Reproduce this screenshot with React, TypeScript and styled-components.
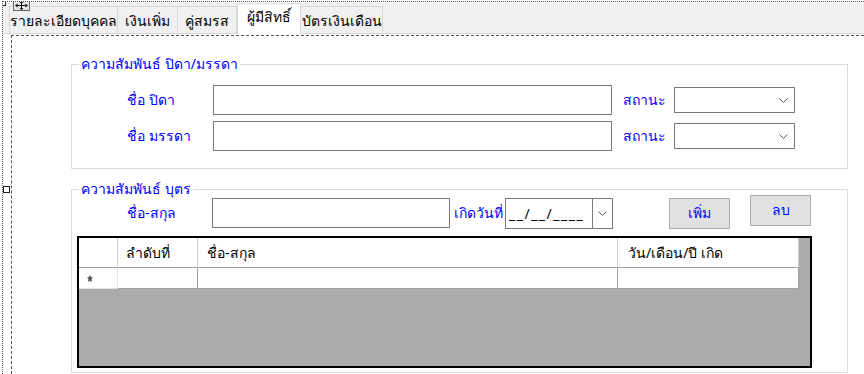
import React from 'react'
import styled, { createGlobalStyle } from 'styled-components'

const uiFont = `"Noto Sans", "DejaVu Sans", sans-serif`

const GlobalStyle = createGlobalStyle`
  html, body {
    margin: 0;
    padding: 0;
    background: #fff;
  }
  body {
    font-family: ${uiFont};
    font-size: 14px;
  }
  * {
    box-sizing: border-box;
  }
`

const Designer = styled.div`
  position: relative;
  width: 862px;
  height: 373px;
  margin: 1px 0 0 2px;
  padding-top: 1px;
  border-top: 1px dotted #555;
  border-left: 1px dotted #555;
  display: flex;
  flex-direction: column;
  overflow: hidden;
`

const Handle = styled.div<{ $top: number; $left: number }>`
  position: absolute;
  top: ${p => p.$top}px;
  left: ${p => p.$left}px;
  width: 7px;
  height: 7px;
  background: #fff;
  border: 1px solid #222;
  z-index: 5;
`

const MoveGlyph = styled.div`
  position: absolute;
  top: -2px;
  left: 10px;
  width: 17px;
  height: 11px;
  background: #e6e6e6;
  border: 1px solid #666;
  display: flex;
  align-items: center;
  justify-content: center;
  z-index: 5;
`

const TabStrip = styled.div`
  display: flex;
  align-items: flex-end;
  height: 31px;
  padding-left: 6px;
  background: #f0f0f0;
  border-bottom: 1px solid #d9d9d9;
`

const Tab = styled.div<{ $active?: boolean; $width: number }>`
  width: ${p => p.$width}px;
  height: ${p => (p.$active ? 31 : 27)}px;
  margin-bottom: ${p => (p.$active ? -1 : 0)}px;
  padding-bottom: ${p => (p.$active ? 4 : 0)}px;
  padding-top: ${p => (p.$active ? 0 : 1)}px;
  display: flex;
  align-items: center;
  justify-content: center;
  background: ${p => (p.$active ? '#fff' : '#f0f0f0')};
  border: 1px solid #d9d9d9;
  border-bottom: none;
  border-left-width: ${p => (p.$active ? 1 : 0)}px;
  color: #000;
  white-space: nowrap;
  position: relative;
  z-index: ${p => (p.$active ? 2 : 1)};
  &:first-child {
    border-left-width: 1px;
  }
`

const TabPage = styled.div`
  flex: 1;
  margin-left: 7px;
  padding: 1px 0 0 1px;
  background: #fff;
  display: flex;
`

const DesignSurface = styled.div`
  flex: 1;
  border-top: 1px dashed #555;
  border-left: 1px dashed #555;
  padding: 20px 0 0 59px;
  display: flex;
  flex-direction: column;
  gap: 12px;
`

const GroupBox = styled.fieldset`
  width: 777px;
  margin: 0;
  min-width: 0;
  padding: 0;
  border: 1px solid #dcdcdc;
`

const Legend = styled.legend`
  margin-left: 7px;
  padding: 0 2px;
  height: 16px;
  line-height: 16px;
  color: #0000ff;
`

const GroupBody = styled.div<{ $pad: string }>`
  padding: ${p => p.$pad};
`

const ParentGrid = styled.div`
  display: grid;
  grid-template-columns: 86px 399px 62px 121px;
  row-gap: 6px;
  align-items: center;
  & > :nth-child(4n + 3) {
    padding-left: 11px;
  }
`

const Label = styled.span<{ $width?: number; $indent?: number }>`
  width: ${p => (p.$width ? `${p.$width}px` : 'auto')};
  padding-left: ${p => p.$indent ?? 0}px;
  flex-shrink: 0;
  color: #0000ff;
  white-space: nowrap;
`

const TextBox = styled.div<{ $width?: number }>`
  width: ${p => (p.$width ? `${p.$width}px` : '100%')};
  height: 30px;
  border: 1px solid #7a7a7a;
  background: #fff;
`

const Combo = styled.div`
  height: 26px;
  border: 1px solid #7a7a7a;
  background: #fff;
  display: flex;
  justify-content: flex-end;
  align-items: center;
  padding-right: 6px;
`

const ChildRow = styled.div`
  display: flex;
  align-items: center;
  height: 32px;
  padding-left: 55px;
`

const DatePicker = styled.div`
  width: 108px;
  height: 31px;
  flex-shrink: 0;
  border: 1px solid #7a7a7a;
  display: flex;
  align-items: stretch;
`

const DateText = styled.div`
  flex: 1;
  padding-left: 3px;
  display: flex;
  align-items: center;
  color: #000;
  letter-spacing: 1.5px;
`

const DateButton = styled.div`
  width: 20px;
  border-left: 1px solid #7a7a7a;
  display: flex;
  align-items: center;
  justify-content: center;
`

const Button = styled.div<{ $lift?: number; $gap: number }>`
  width: 61px;
  height: 31px;
  flex-shrink: 0;
  margin-left: ${p => p.$gap}px;
  margin-top: ${p => -(p.$lift ?? 0)}px;
  margin-bottom: ${p => p.$lift ?? 0}px;
  background: #e1e1e1;
  border: 1px solid #adadad;
  color: #0000ff;
  display: flex;
  align-items: center;
  justify-content: center;
`

const DataGrid = styled.div`
  margin: 7px 0 4px 5px;
  width: 735px;
  height: 132px;
  border: 2px solid #000;
  background: #ababab;
  display: grid;
  grid-template-columns: 39px 80px 420px 181px;
  grid-template-rows: 30px 21px;
  align-content: start;
`

const HeaderCell = styled.div<{ $pad?: number }>`
  background: #fff;
  border-right: 1px solid #d0d0d0;
  border-bottom: 1px solid #a0a0a0;
  padding-left: ${p => p.$pad ?? 8}px;
  display: flex;
  align-items: center;
  color: #000;
  white-space: nowrap;
`

const Cell = styled.div`
  background: #fff;
  border-right: 1px solid #a0a0a0;
  border-bottom: 1px solid #a0a0a0;
`

const RowHeader = styled.div`
  background: #fff;
  border-right: 1px solid #e3e3e3;
  border-bottom: 1px solid #e3e3e3;
  display: flex;
  align-items: center;
  padding-left: 8px;
`

const NewRowMark = () => (
  <svg width="6" height="7" viewBox="0 0 6 7">
    <path d="M3 0 L4 2 L6 2.5 L4.5 4 L5 7 L3 5.8 L1 7 L1.5 4 L0 2.5 L2 2 Z" fill="#555" />
  </svg>
)

const Chevron = () => (
  <svg width="9" height="5" viewBox="0 0 9 5">
    <polyline points="0.5,0.5 4.5,4.5 8.5,0.5" fill="none" stroke="#555" strokeWidth="1" />
  </svg>
)

const MoveIcon = () => (
  <svg width="13" height="9" viewBox="0 0 13 9">
    <g stroke="#111" strokeWidth="1" fill="#111">
      <line x1="1" y1="4.5" x2="12" y2="4.5" />
      <line x1="6.5" y1="0" x2="6.5" y2="9" />
      <polygon points="0,4.5 2.5,2.5 2.5,6.5" strokeWidth="0" />
      <polygon points="13,4.5 10.5,2.5 10.5,6.5" strokeWidth="0" />
      <polygon points="6.5,0 4.5,2 8.5,2" strokeWidth="0" />
      <polygon points="6.5,9 4.5,7 8.5,7" strokeWidth="0" />
    </g>
  </svg>
)

const tabs = [
  { title: 'รายละเอียดบุคคล', width: 109 },
  { title: 'เงินเพิ่ม', width: 60 },
  { title: 'คู่สมรส', width: 59 },
  { title: 'ผู้มีสิทธิ์', width: 64, active: true },
  { title: 'บัตรเงินเดือน', width: 82 },
]

const parents = ['ชื่อ ปิดา', 'ชื่อ มรรดา']

const columns = [
  { title: 'ลำดับที่', pad: 8 },
  { title: 'ชื่อ-สกุล', pad: 9 },
  { title: 'วัน/เดือน/ปี เกิด', pad: 10 },
]

export default function App() {
  return (
    <>
      <GlobalStyle />
      <Designer>
        <Handle $top={-3} $left={-4} />
        <Handle $top={184} $left={0} />
        <MoveGlyph>
          <MoveIcon />
        </MoveGlyph>
        <TabStrip>
          {tabs.map(t => (
            <Tab key={t.title} $active={t.active} $width={t.width}>
              {t.title}
            </Tab>
          ))}
        </TabStrip>
        <TabPage>
          <DesignSurface>
            <GroupBox>
              <Legend>ความสัมพันธ์ ปิดา/มรรดา</Legend>
              <GroupBody $pad="13px 0 17px 55px">
                <ParentGrid>
                  {parents.map(name => (
                    <React.Fragment key={name}>
                      <Label>{name}</Label>
                      <TextBox />
                      <Label>สถานะ</Label>
                      <Combo>
                        <Chevron />
                      </Combo>
                    </React.Fragment>
                  ))}
                </ParentGrid>
              </GroupBody>
            </GroupBox>
            <GroupBox>
              <Legend>ความสัมพันธ์ บุตร</Legend>
              <GroupBody $pad="0 0 0 0">
                <ChildRow>
                  <Label $width={85}>ชื่อ-สกุล</Label>
                  <TextBox $width={238} />
                  <Label $width={55} $indent={4}>เกิดวันที่</Label>
                  <DatePicker>
                    <DateText>__/__/____</DateText>
                    <DateButton>
                      <Chevron />
                    </DateButton>
                  </DatePicker>
                  <Button $gap={56}>เพิ่ม</Button>
                  <Button $gap={20} $lift={3}>ลบ</Button>
                </ChildRow>
                <DataGrid>
                  <HeaderCell />
                  {columns.map(c => (
                    <HeaderCell key={c.title} $pad={c.pad}>
                      {c.title}
                    </HeaderCell>
                  ))}
                  <RowHeader>
                    <NewRowMark />
                  </RowHeader>
                  <Cell />
                  <Cell />
                  <Cell />
                </DataGrid>
              </GroupBody>
            </GroupBox>
          </DesignSurface>
        </TabPage>
      </Designer>
    </>
  )
}
